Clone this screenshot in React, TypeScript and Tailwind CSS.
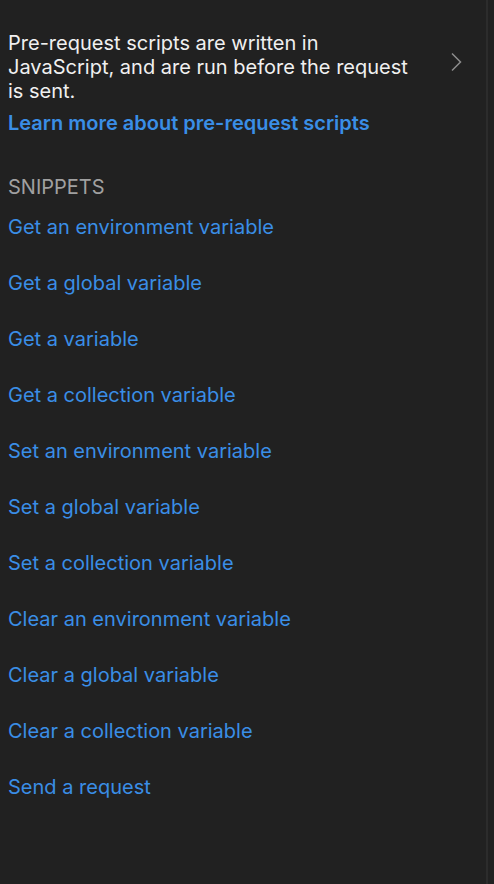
import React from 'react'

const snippets = [
    'Get an environment variable',
    'Get a global variable',
    'Get a variable',
    'Get a collection variable',
    'Set an environment variable',
    'Set a global variable',
    'Set a collection variable',
    'Clear an environment variable',
    'Clear a global variable',
    'Clear a collection variable',
    'Send a request',
]

export default function App() {
    return (
        <div className="flex h-[884px] w-[494px] bg-[#212121] font-['Inter','Liberation_Sans',sans-serif] text-[20px] leading-6">
            <div className="flex-1 pl-2 pt-[31px]">
                {/* Intro */}
                <div className="flex items-start">
                    <div className="w-[420px] pr-2">
                        <p className="text-[#f0f0f0]">
                            Pre-request scripts are written in JavaScript, and are run before the request is sent.
                        </p>
                        <a href="#" className="mt-2 block font-semibold text-[#3a8ee6]">
                            Learn more about pre-request scripts
                        </a>
                    </div>
                    <svg className="ml-[18px] mt-[21px] h-5 w-5 text-[#8c8c8c]" viewBox="0 0 20 20" fill="none" stroke="currentColor" strokeWidth="1.5">
                        <path d="M6 1.5 14.5 10 6 18.5" />
                    </svg>
                </div>

                {/* Snippets */}
                <div className="mt-10 text-[#a0a0a0]">SNIPPETS</div>
                <ul className="mt-4 flex flex-col gap-8">
                    {snippets.map((s) => (
                        <li key={s}>
                            <a href="#" className="text-[#3a8ee6]">{s}</a>
                        </li>
                    ))}
                </ul>
            </div>
            <div className="w-[2px] bg-[#2c2c2c]" />
            <div className="w-[6px]" />
        </div>
    )
}
